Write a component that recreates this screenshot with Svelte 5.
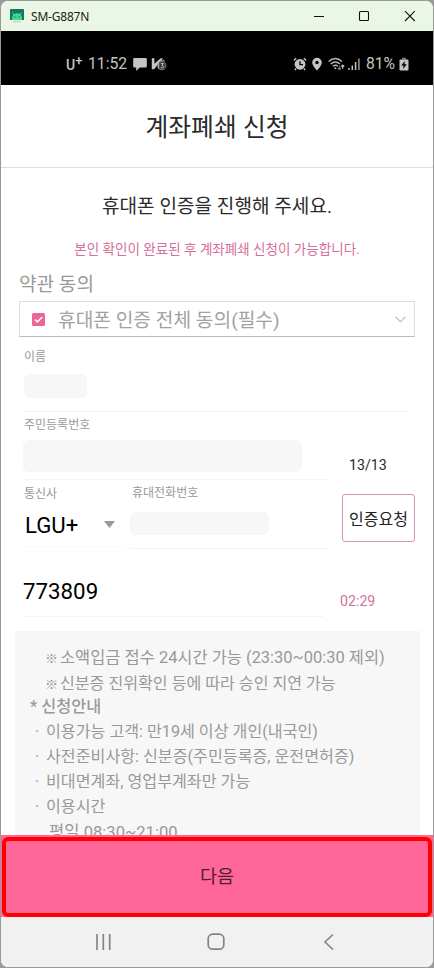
<script>
  const notes = [
    { text: '소액입금 접수 24시간 가능 (23:30~00:30 제외)', kind: 'mark', bullet: '※' },
    { text: '신분증 진위확인 등에 따라 승인 지연 가능', kind: 'mark second', bullet: '※' },
    { text: '* 신청안내', kind: 'head' },
    { text: '이용가능 고객: 만19세 이상 개인(내국인)', kind: 'item', bullet: '·' },
    { text: '사전준비사항: 신분증(주민등록증, 운전면허증)', kind: 'item', bullet: '·' },
    { text: '비대면계좌, 영업부계좌만 가능', kind: 'item', bullet: '·' },
    { text: '이용시간', kind: 'item', bullet: '·' },
    { text: '평일 08:30~21:00', kind: 'sub' }
  ];
  let agreed = $state(true);
</script>

<div class="window">
  <header class="titlebar">
    <svg class="app" width="14" height="14" viewBox="0 0 14 14">
      <rect width="14" height="11" rx=".6" fill="#167466" />
      <path d="M2 11v-2a5 4.8 0 0 1 10 0v2z" fill="#3ddc84" />
      <path d="M2.4 3.4l1.8 2.4M11.6 3.4L9.8 5.8" stroke="#3ddc84" stroke-width="1" />
      <circle cx="4.8" cy="8" r=".7" fill="#167466" />
      <circle cx="9.2" cy="8" r=".7" fill="#167466" />
      <path d="M3 12.7h8" stroke="#cbd3cb" stroke-width="1.8" />
    </svg>
    <span class="device">SM-G887N</span>
    <svg class="controls" width="104" height="14" viewBox="0 0 104 14" fill="none" stroke="#111" stroke-width="1.1">
      <path d="M1 7.5h10" />
      <rect x="46.5" y="2.5" width="9" height="9" rx="1" />
      <path d="M92 2.2l9.8 9.8M101.8 2.2L92 12" />
    </svg>
  </header>

  <div class="status">
    <span class="carrier">U<sup>+</sup></span>
    <span class="clock">11:52</span>
    <svg class="chat" width="14" height="14" viewBox="0 0 14 14" fill="#c4c4c4">
      <path d="M1.3 1h11.4q1.1 0 1.1 1v7.4q0 1-1.1 1H6.8L3.2 14v-3.6H1.3q-1.1 0-1.1-1V2q0-1 1.1-1z" />
    </svg>
    <svg class="vaccine" width="17" height="14" viewBox="0 0 17 14">
      <path d="M.8 1.2h2.6v5.6L9.6 1.2h2.2L3.2 12.2H.8z" fill="#c4c4c4" />
      <circle cx="10.8" cy="8.6" r="4.1" fill="#333" stroke="#999" stroke-width=".8" />
      <path d="M6.6 7l1.1-.8v5.4M9.8 6.6h2.6l-1.5 1.7q2 .2 1.5 1.9-1 1.3-2.7.4" fill="none" stroke="#c4c4c4" stroke-width="1" />
      <path d="M10 3.6q2-1.3 3.6.3" fill="none" stroke="#aaa" stroke-width="1" />
    </svg>
    <span class="gap"></span>
    <svg class="alarm" width="14" height="14" viewBox="0 0 14 14" fill="none" stroke="#c4c4c4">
      <circle cx="7" cy="7.3" r="5.4" fill="#c4c4c4" stroke="none" />
      <path d="M7 4.3v3.4h3" stroke="#000" stroke-width="1.3" />
      <path d="M.8 3.4l2.4-2.2M13.2 3.4l-2.4-2.2M3.2 11.5l-1.4 1.5M10.8 11.5l1.4 1.5" stroke-width="1.4" />
    </svg>
    <svg class="pin" width="10" height="14" viewBox="0 0 10 14">
      <path d="M5 .8a4.8 4.8 0 0 0-4.8 4.8C.2 8.7 5 13.6 5 13.6S9.8 8.7 9.8 5.6A4.8 4.8 0 0 0 5 .8z" fill="#c4c4c4" />
      <circle cx="5" cy="5.5" r="1.7" />
    </svg>
    <svg class="wifi" width="17" height="14" viewBox="0 0 17 14" fill="none" stroke="#b8b8b8" stroke-width="1.4">
      <path d="M.6 4.6q6.6-6 13.4 0M2.7 7q4.6-4.2 9.2 0M4.9 9.3q2.5-2.3 5 0" />
      <circle cx="7.3" cy="11.3" r="1" fill="#b8b8b8" stroke="none" />
      <path d="M11.4 8.7v4M9.8 11l1.6 1.6 1.6-1.6" stroke="#777" stroke-width="1.1" />
      <path d="M14.7 12V8M13.1 9.5L14.7 8l1.6 1.5" stroke-width="1.1" />
    </svg>
    <svg class="signal" width="12" height="14" viewBox="0 0 12 14" stroke="#c4c4c4" stroke-width="1.5">
      <path d="M1 13v-2M4.3 13V8.5M7.6 13V5" />
      <path d="M10.9 13V1.5" stroke="#999" />
    </svg>
    <span class="percent">81%</span>
    <svg class="battery" width="10" height="14" viewBox="0 0 10 14">
      <path d="M3 .8h4v1.6H3z" fill="#777" />
      <rect x=".5" y="2.4" width="9" height="11" rx="1" fill="#c4c4c4" />
      <path d="M5.8 4L2.3 8.5h2.2L4 12l3.8-4.7H5.5z" fill="#000" />
    </svg>
  </div>

  <h1>계좌폐쇄 신청</h1>

  <main>
    <h2>휴대폰 인증을 진행해 주세요.</h2>
    <p class="lead">본인 확인이 완료된 후 계좌폐쇄 신청이 가능합니다.</p>

    <h3>약관 동의</h3>
    <button class="agree" onclick={() => (agreed = !agreed)}>
      <svg width="13" height="13" viewBox="0 0 13 13">
        <rect width="13" height="13" rx="1.5" fill="#ec6799" />
        {#if agreed}
          <path d="M3 6.5l2.3 2.4L10.3 4" fill="none" stroke="#fff" stroke-width="1.5" />
        {/if}
      </svg>
      <span>휴대폰 인증 전체 동의(필수)</span>
      <svg class="chevron" width="11" height="7" viewBox="0 0 11 7" fill="none" stroke="#c6c6c6" stroke-width="1.3">
        <path d="M.6.8l4.9 5 4.9-5" />
      </svg>
    </button>

    <div class="field name">
      <span class="label">이름</span>
      <span class="mask"></span>
    </div>

    <div class="row">
      <div class="field resident">
        <span class="label">주민등록번호</span>
        <span class="mask"></span>
      </div>
      <span class="count">13/13</span>
    </div>

    <div class="row">
      <div class="field telecom">
        <span class="label">통신사</span>
        <div class="select">
          <span>LGU+</span>
          <svg width="11" height="7" viewBox="0 0 11 7"><path d="M0 0h11L5.5 7z" fill="#999" /></svg>
        </div>
      </div>
      <div class="field phone">
        <span class="label">휴대전화번호</span>
        <span class="mask"></span>
      </div>
      <button class="request">인증요청</button>
    </div>

    <div class="row">
      <div class="field code">773809</div>
      <span class="timer">02:29</span>
    </div>

    <section class="notice">
      {#each notes as note}
        <p class={note.kind}>{#if note.bullet}<i>{note.bullet}</i>{/if}{note.text}</p>
      {/each}
    </section>
  </main>

  <div class="bottom">
    <button class="next">다음</button>
  </div>

  <nav>
    <svg width="432" height="50" viewBox="0 0 432 50" fill="none" stroke="#858585" stroke-width="1.7">
      <path d="M96 17v16M102.3 17v16M108.7 17v16" />
      <rect x="207.2" y="17.2" width="15.6" height="15" rx="4.5" />
      <path d="M332 17.5l-8 7.5 8 7.5" />
    </svg>
  </nav>
</div>

<style>
  :global(body) {
    background: #999;
  }
  .window {
    box-sizing: border-box;
    width: 434px;
    height: 968px;
    display: flex;
    flex-direction: column;
    border: 1px solid #999;
    border-radius: 8px;
    overflow: hidden;
    background: #fff;
    font-family: Roboto, "Noto Sans CJK KR", sans-serif;
    color: #2b2b2b;
  }
  h1, h2, h3, p {
    margin: 0;
    font-weight: 400;
  }
  button {
    font: inherit;
    color: inherit;
    padding: 0;
    border-radius: 0;
    box-sizing: border-box;
  }
  svg {
    display: block;
    flex: none;
  }
  .titlebar {
    flex: none;
    height: 30px;
    display: flex;
    align-items: center;
    padding: 0 16px 0 9px;
    background: #ebf7e6;
  }
  .device {
    flex: 1;
    margin-left: 7px;
    font: 12px "Noto Sans", sans-serif;
    letter-spacing: -0.2px;
    color: #222;
  }
  .status {
    flex: none;
    height: 54px;
    box-sizing: border-box;
    display: flex;
    align-items: center;
    padding: 12px 23px 0 65px;
    background: #000;
    color: #c4c4c4;
    font-size: 16px;
    line-height: 20px;
    white-space: nowrap;
  }
  .carrier {
    width: 22px;
    padding-top: 2px;
    font-weight: 500;
    font-size: 14px;
  }
  .carrier sup {
    font-size: 13px;
    line-height: 0;
    vertical-align: 5px;
  }
  .clock {
    font-size: 15.7px;
  }
  .chat {
    margin-left: 6px;
  }
  .vaccine {
    margin-left: 4px;
  }
  .gap {
    flex: 1;
  }
  .pin {
    margin-left: 5px;
  }
  .wifi {
    margin-left: 6px;
  }
  .signal {
    margin-left: 3px;
  }
  .percent {
    margin: 0 4px 0 6px;
    font-size: 15.7px;
  }
  .battery {
    margin-right: 1px;
  }
  h1 {
    flex: none;
    height: 83px;
    box-sizing: border-box;
    padding-bottom: 3px;
    display: flex;
    align-items: center;
    justify-content: center;
    border-bottom: 1px solid #ddd;
    font-size: 24.8px;
  }
  main {
    flex: 1;
    min-height: 0;
    overflow: hidden;
    display: flex;
    flex-direction: column;
  }
  main > * {
    flex: none;
  }
  h2 {
    padding-top: 25px;
    height: 42px;
    line-height: 28px;
    font-size: 19.1px;
    text-align: center;
  }
  .lead {
    height: 32px;
    padding-top: 4px;
    box-sizing: border-box;
    line-height: 20px;
    font-size: 13.55px;
    text-align: center;
    color: #d4709c;
  }
  h3 {
    height: 32px;
    padding: 2px 0 0 18px;
    line-height: 32px;
    font-size: 19.1px;
    color: #999;
  }
  .agree {
    height: 36px;
    margin: 0 18px;
    padding: 0 8px 0 12px;
    display: flex;
    align-items: center;
    border: 1px solid #ddd;
    border-bottom-color: #bbb;
    background: #fff;
    font-size: 19.2px;
    color: #a2a2a2;
  }
  .agree span {
    flex: 1;
    margin-left: 13px;
    text-align: left;
  }
  .row {
    display: flex;
  }
  .field {
    box-sizing: border-box;
    border-bottom: 1px solid #f4f4f4;
  }
  .label {
    display: block;
    line-height: 18px;
    font-size: 12px;
    color: #999;
  }
  .mask {
    display: block;
    border-radius: 6px;
    background: #f7f7f7;
  }
  .name {
    height: 75px;
    margin: 0 24px 0 23px;
    padding-top: 11px;
  }
  .name .mask {
    width: 63px;
    height: 24px;
    margin-top: 8px;
  }
  .resident {
    width: 306px;
    height: 68px;
    margin-left: 22px;
    padding-top: 4px;
  }
  .resident .mask {
    width: 279px;
    height: 32px;
    margin-top: 6px;
  }
  .resident .label {
    padding-left: 1px;
  }
  .count {
    margin: 43px 0 0 20px;
    line-height: 20px;
    font-size: 14.2px;
  }
  .telecom {
    width: 101px;
    height: 67px;
    margin-left: 23px;
    padding-top: 5px;
    border-bottom-color: #fafafa;
  }
  .select {
    display: flex;
    align-items: center;
    justify-content: space-between;
    padding: 0 10px 0 1px;
    height: 43px;
    font-size: 22.2px;
    color: #000;
  }
  .phone {
    width: 198px;
    height: 69px;
    margin-left: 5px;
    padding-top: 4px;
  }
  .phone .label {
    padding-left: 2px;
  }
  .phone .mask {
    width: 139px;
    height: 23px;
    margin-top: 10px;
  }
  .request {
    width: 73px;
    height: 48px;
    margin: 14px 0 0 14px;
    border: 1px solid #d893b0;
    border-radius: 3px;
    background: #fff;
    font-size: 16px;
    color: #222;
  }
  .code {
    width: 300px;
    height: 68px;
    margin-left: 22px;
    padding-top: 26px;
    line-height: 32px;
    font-size: 22.3px;
    color: #000;
  }
  .timer {
    margin: 42px 0 0 17px;
    line-height: 20px;
    font-size: 14.2px;
    color: #d4709c;
  }
  .notice {
    height: 260px;
    margin: 14px 13px 0 14px;
    padding: 14px 0 0 15px;
    box-sizing: border-box;
    background: #f7f7f7;
    font-size: 16.15px;
    line-height: 25.3px;
    color: #999;
    white-space: nowrap;
  }
  .notice p {
    height: 25.3px;
  }
  .notice i {
    display: inline-block;
    width: 16px;
    padding-left: 5px;
    box-sizing: border-box;
    font-style: normal;
  }
  .notice .mark {
    height: 26px;
    padding-left: 15px;
    line-height: 26px;
    font-size: 16.45px;
  }
  .notice .second {
    height: 25px;
    font-size: 16.1px;
  }
  .notice .mark i {
    width: 15px;
    padding-left: 0;
    font-size: 13px;
    line-height: 16px;
  }
  .notice .head {
    height: 22.5px;
    font-weight: 500;
    line-height: 22px;
    font-size: 16.3px;
  }
  .sub {
    padding-left: 19px;
    font-size: 16.6px;
  }
  .bottom {
    flex: none;
    height: 82px;
    display: flex;
    background: #ff6699;
    padding: 2px 1px 0;
    box-sizing: border-box;
  }
  .next {
    flex: 1;
    padding-bottom: 4px;
    border: 4px solid #f00;
    border-radius: 6px;
    background: #ff6699;
    font-size: 18.5px;
    color: #4a1f30;
  }
  nav {
    flex: none;
    height: 50px;
    background: #f1f1f1;
  }
</style>
